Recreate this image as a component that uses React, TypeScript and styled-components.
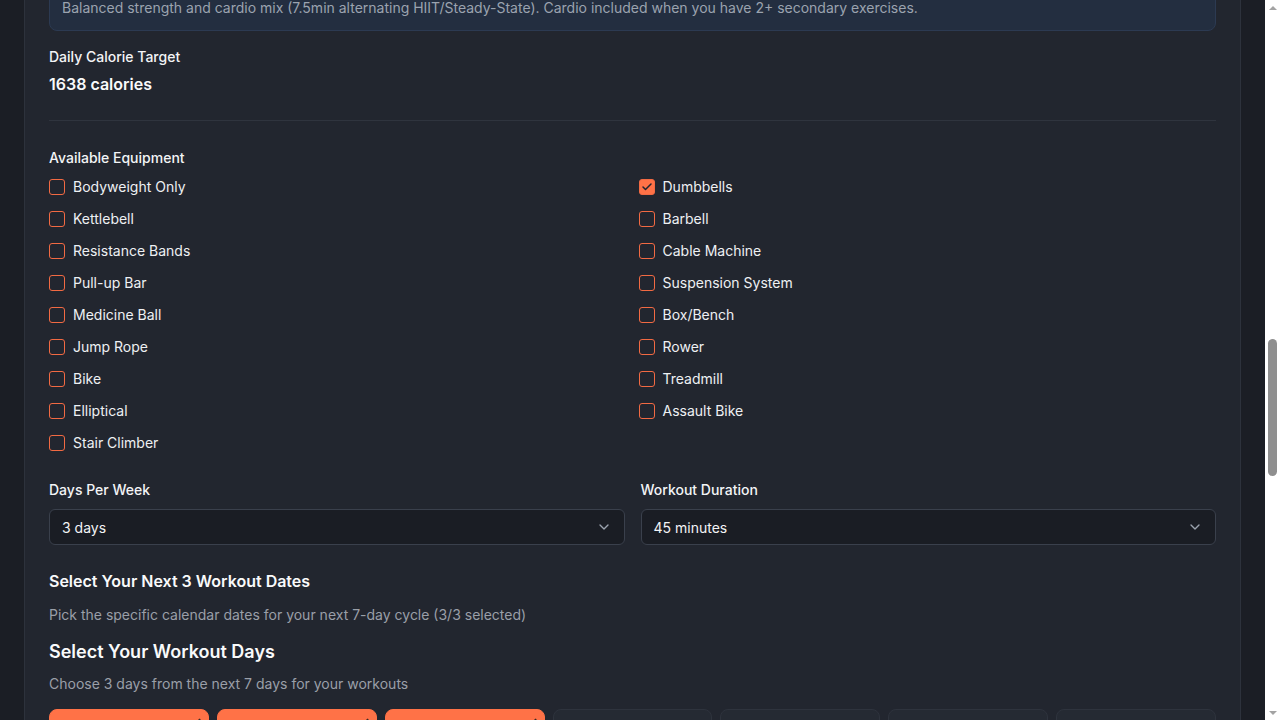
import React, { useState } from "react";
import styled, { createGlobalStyle } from "styled-components";

const Global = createGlobalStyle`
  html, body { background: #1b1e25; }
  body {
    margin: 0;
    font-family: Inter, "Noto Sans", sans-serif;
    color: #f3f4f6;
    -webkit-font-smoothing: antialiased;
  }
`;

const Viewport = styled.div`
  display: flex;
  height: 100vh;
  overflow: hidden;
`;

const Main = styled.main`
  flex: 1;
  min-width: 0;
  overflow: hidden;
  background: #1b1e25;
`;

const Rail = styled.div`
  width: 15px;
  flex-shrink: 0;
  background: #ffffff;
  display: flex;
  flex-direction: column;
  align-items: center;
`;

const Arrow = styled.div<{ $down?: boolean }>`
  height: 15px;
  width: 15px;
  display: flex;
  align-items: center;
  justify-content: center;
  &::before {
    content: "";
    width: 0;
    height: 0;
    border-left: 4px solid transparent;
    border-right: 4px solid transparent;
    ${(p) =>
      p.$down
        ? "border-top: 4px solid #a3a3a3;"
        : "border-bottom: 4px solid #a3a3a3;"}
  }
`;

const Track = styled.div`
  flex: 1;
  width: 100%;
  display: flex;
  flex-direction: column;
  align-items: center;
`;

const Thumb = styled.div`
  margin-top: 324px;
  width: 9px;
  height: 137px;
  border-radius: 5px;
  background: #8f8f8f;
`;

const Page = styled.div`
  padding: 0 24px 40px;
`;

const Card = styled.section`
  margin-top: -68px;
  background: #22262f;
  border: 1px solid #2d323c;
  border-radius: 10px;
  padding: 24px;
  display: flex;
  flex-direction: column;
`;

const Banner = styled.div`
  background: #232e40;
  border: 1px solid #2c3a52;
  border-radius: 8px;
  padding: 12px;
  display: flex;
  flex-direction: column;
  gap: 4px;
`;

const BannerTitle = styled.div`
  font-size: 16px;
  line-height: 24px;
  font-weight: 600;
  color: #e5e7eb;
`;

const BannerText = styled.div`
  font-size: 14px;
  line-height: 20px;
  color: #9ba3af;
`;

const CalorieBlock = styled.div`
  margin-top: 16px;
  padding-bottom: 24px;
  border-bottom: 1px solid #2f343e;
  display: flex;
  flex-direction: column;
  gap: 5px;
`;

const Label = styled.div<{ $mb?: number }>`
  font-size: 14px;
  line-height: 20px;
  font-weight: 500;
  color: #f3f4f6;
  margin-bottom: ${(p) => p.$mb ?? 0}px;
`;

const BigValue = styled.div`
  font-size: 16px;
  line-height: 24px;
  font-weight: 600;
  color: #f9fafb;
`;

const Section = styled.div<{ $mt: number }>`
  margin-top: ${(p) => p.$mt}px;
  display: flex;
  flex-direction: column;
`;

const EquipGrid = styled.div`
  display: grid;
  grid-template-columns: 1fr 1fr;
  gap: 12px;
`;

const CheckRow = styled.label`
  display: flex;
  align-items: center;
  gap: 8px;
  font-size: 14px;
  line-height: 20px;
  color: #eef0f3;
  cursor: pointer;
`;

const Box = styled.span<{ $on: boolean }>`
  width: 16px;
  height: 16px;
  box-sizing: border-box;
  border-radius: 3px;
  border: 1px solid #f26a43;
  background: ${(p) => (p.$on ? "#ff7247" : "transparent")};
  display: flex;
  align-items: center;
  justify-content: center;
  flex-shrink: 0;
`;

const SelectRow = styled.div`
  margin-top: 27px;
  display: grid;
  grid-template-columns: 1fr 1fr;
  gap: 16px;
`;

const Field = styled.div`
  display: flex;
  flex-direction: column;
  gap: 9px;
`;

const SelectBox = styled.div`
  height: 36px;
  box-sizing: border-box;
  border: 1px solid #3a404c;
  border-radius: 6px;
  background: #1a1d24;
  padding: 0 12px;
  display: flex;
  align-items: center;
  justify-content: space-between;
  font-size: 14px;
  color: #f3f4f6;
`;

const H3 = styled.h3`
  margin: 24px 0 0;
  font-size: 16px;
  line-height: 24px;
  font-weight: 600;
  color: #f9fafb;
`;

const H2 = styled.h2`
  margin: 13px 0 0;
  font-size: 18px;
  line-height: 28px;
  font-weight: 600;
  color: #f9fafb;
`;

const Sub = styled.p<{ $mt: number }>`
  margin: ${(p) => p.$mt}px 0 0;
  font-size: 14px;
  line-height: 20px;
  color: #9a9fa8;
`;

const DayGrid = styled.div`
  margin-top: 15px;
  display: grid;
  grid-template-columns: repeat(7, 1fr);
  gap: 8px;
`;

const DayCard = styled.button<{ $on: boolean }>`
  position: relative;
  height: 84px;
  border-radius: 8px;
  border: 1px solid ${(p) => (p.$on ? "#ff7247" : "#2e333d")};
  background: ${(p) => (p.$on ? "#ff7247" : "#252a33")};
  color: ${(p) => (p.$on ? "#ffffff" : "#e5e7eb")};
  font-family: inherit;
  display: flex;
  flex-direction: column;
  align-items: center;
  justify-content: center;
  gap: 2px;
  cursor: pointer;
`;

const DayName = styled.span`
  font-size: 14px;
  font-weight: 600;
`;

const DayDate = styled.span`
  font-size: 12px;
  opacity: 0.85;
`;

const Badge = styled.span`
  position: absolute;
  top: 6px;
  right: 6px;
  display: flex;
`;

const Check = ({ color = "#1f2430", size = 12 }: { color?: string; size?: number }) => (
  <svg width={size} height={size} viewBox="0 0 24 24" fill="none" stroke={color} strokeWidth={3} strokeLinecap="round" strokeLinejoin="round">
    <path d="M20 6 9 17l-5-5" />
  </svg>
);

const Chevron = () => (
  <svg width="16" height="16" viewBox="0 0 24 24" fill="none" stroke="#9ca3af" strokeWidth={2} strokeLinecap="round" strokeLinejoin="round">
    <path d="m6 9 6 6 6-6" />
  </svg>
);

const equipment: [string, boolean][] = [
  ["Bodyweight Only", false],
  ["Dumbbells", true],
  ["Kettlebell", false],
  ["Barbell", false],
  ["Resistance Bands", false],
  ["Cable Machine", false],
  ["Pull-up Bar", false],
  ["Suspension System", false],
  ["Medicine Ball", false],
  ["Box/Bench", false],
  ["Jump Rope", false],
  ["Rower", false],
  ["Bike", false],
  ["Treadmill", false],
  ["Elliptical", false],
  ["Assault Bike", false],
  ["Stair Climber", false],
];

const days = [
  ["Mon", "Jan 6", true],
  ["Tue", "Jan 7", true],
  ["Wed", "Jan 8", true],
  ["Thu", "Jan 9", false],
  ["Fri", "Jan 10", false],
  ["Sat", "Jan 11", false],
  ["Sun", "Jan 12", false],
] as const;

export default function App() {
  const [eq, setEq] = useState(equipment);
  return (
    <>
      <Global />
      <Viewport>
        <Main>
          <Page>
            <Card>
              <Banner>
                <BannerTitle>Hybrid Training</BannerTitle>
                <BannerText>
                  Balanced strength and cardio mix (7.5min alternating HIIT/Steady-State). Cardio included when you have 2+ secondary exercises.
                </BannerText>
              </Banner>

              <CalorieBlock>
                <Label>Daily Calorie Target</Label>
                <BigValue>1638 calories</BigValue>
              </CalorieBlock>

              <Section $mt={27}>
                <Label $mb={9}>Available Equipment</Label>
                <EquipGrid>
                  {eq.map(([name, on], i) => (
                    <CheckRow
                      key={name}
                      onClick={() => setEq(eq.map((e, j) => (j === i ? [e[0], !e[1]] : e)))}
                    >
                      <Box $on={on}>{on && <Check size={12} color="#1f2430" />}</Box>
                      {name}
                    </CheckRow>
                  ))}
                </EquipGrid>
              </Section>

              <SelectRow>
                <Field>
                  <Label>Days Per Week</Label>
                  <SelectBox>
                    3 days
                    <Chevron />
                  </SelectBox>
                </Field>
                <Field>
                  <Label>Workout Duration</Label>
                  <SelectBox>
                    45 minutes
                    <Chevron />
                  </SelectBox>
                </Field>
              </SelectRow>

              <H3>Select Your Next 3 Workout Dates</H3>
              <Sub $mt={12}>Pick the specific calendar dates for your next 7-day cycle (3/3 selected)</Sub>
              <H2>Select Your Workout Days</H2>
              <Sub $mt={8}>Choose 3 days from the next 7 days for your workouts</Sub>

              <DayGrid>
                {days.map(([d, date, on]) => (
                  <DayCard key={d} $on={on}>
                    {on && (
                      <Badge>
                        <Check size={14} color="#3a2a25" />
                      </Badge>
                    )}
                    <DayName>{d}</DayName>
                    <DayDate>{date}</DayDate>
                  </DayCard>
                ))}
              </DayGrid>
            </Card>
          </Page>
        </Main>
        <Rail>
          <Arrow />
          <Track>
            <Thumb />
          </Track>
          <Arrow $down />
        </Rail>
      </Viewport>
    </>
  );
}
